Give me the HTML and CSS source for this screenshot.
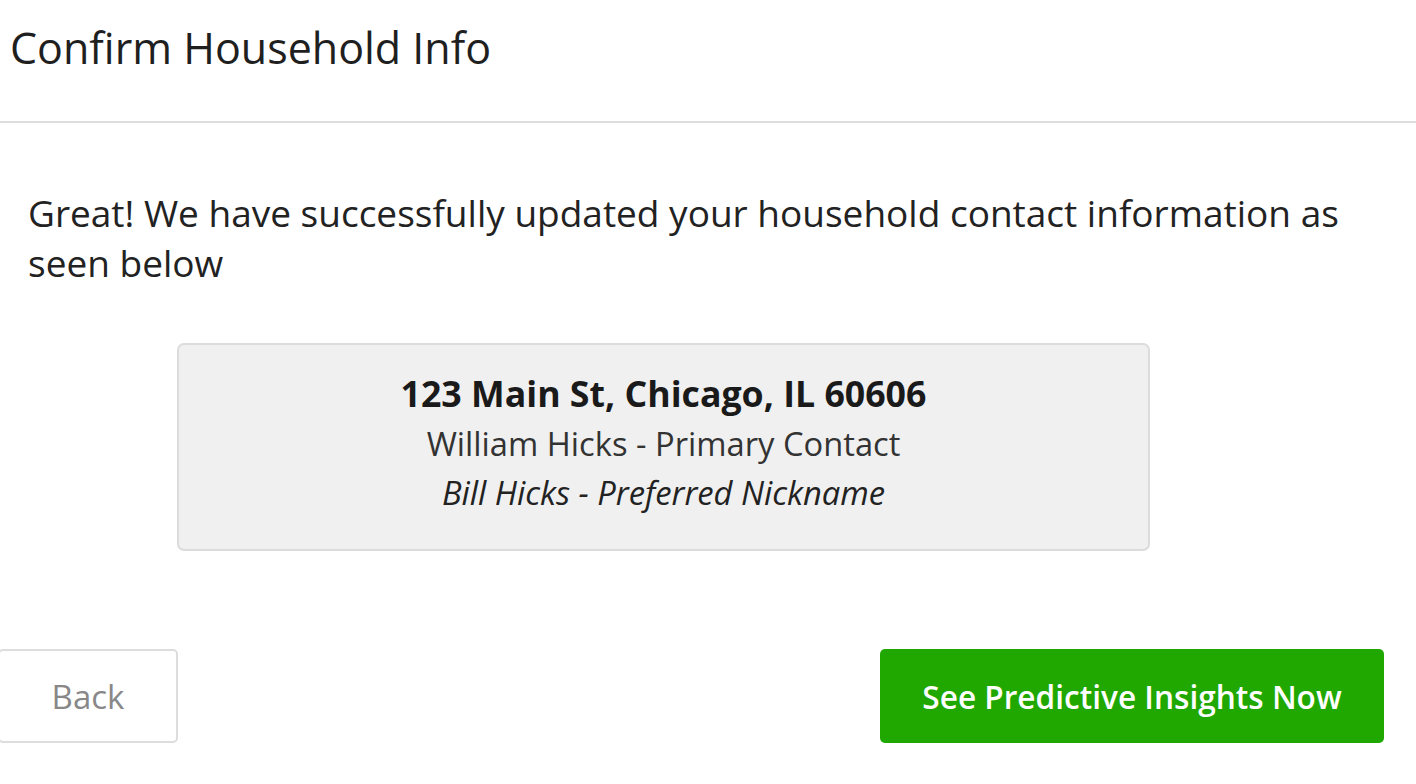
FILE: index.html
```html
<!DOCTYPE html>
<html lang="en">

<head>
    <meta charset="UTF-8">
    <meta name="viewport" content="width=device-width, initial-scale=1.0">
    <title>Confirm Household Info</title>
    <link rel="stylesheet" href="styles.css">
</head>

<body>

    <div class="modal">
        <div class="modal-header">
            <h2>Confirm Household Info</h2>
        </div>

        <div class="modal-body">
            <p class="message">Great! We have successfully updated your household contact information as seen below</p>

            <div class="household-card">
                <div class="address">123 Main St, Chicago, IL 60606</div>
                <div class="contact">William Hicks - Primary Contact</div>
                <div class="nickname">Bill Hicks - Preferred Nickname</div>
            </div>
        </div>

        <div class="modal-footer">
            <button class="back-button">Back</button>
            <button class="insights-button">See Predictive Insights Now</button>
        </div>
    </div>

</body>

</html>
```

FILE: styles.css
```css
body {
    font-family: "Open Sans", Arial, sans-serif;
    background-color: #fff;
    color: #222;
    margin: 0;
    padding: 0;
}

.modal {
    width: 1416px;
}

.modal-header {
    padding: 21px 10px 46px;
    border-bottom: 2px solid #ddd;
}

h2 {
    margin: 0;
    font-size: 43px;
    font-weight: normal;
    line-height: 54px;
    color: #1f1f1f;
}

.modal-body {
    padding: 0 28px;
}

.message {
    margin: 65px 0 0;
    font-size: 37px;
    line-height: 50px;
    color: #222;
}

.household-card {
    width: 969px;
    margin: 55px 0 0 149px;
    padding: 23px 0 33px;
    background: #f0f0f0;
    border: 2px solid #dcdcdc;
    border-radius: 7px;
    text-align: center;
}

.address {
    font-size: 35.7px;
    font-weight: bold;
    line-height: 50px;
    color: #1a1a1a;
}

.contact {
    font-size: 32.7px;
    line-height: 51px;
    color: #333;
}

.nickname {
    font-size: 32.7px;
    font-style: italic;
    line-height: 47px;
    color: #222;
}

.modal-footer {
    display: flex;
    justify-content: space-between;
    align-items: center;
    margin-top: 98px;
    padding-right: 32px;
}

.back-button {
    width: 180px;
    height: 94px;
    margin-left: -2px;
    background: #fff;
    border: 2px solid #ddd;
    border-radius: 5px;
    font-family: "Open Sans", Arial, sans-serif;
    font-size: 33px;
    color: #888;
    cursor: pointer;
}

.insights-button {
    width: 504px;
    height: 94px;
    background-color: #21a800;
    border: none;
    border-radius: 5px;
    font-family: "Open Sans", Arial, sans-serif;
    font-size: 31.6px;
    font-weight: 600;
    color: #fff;
    cursor: pointer;
}

.insights-button:hover {
    background-color: #1d9600;
}
```
